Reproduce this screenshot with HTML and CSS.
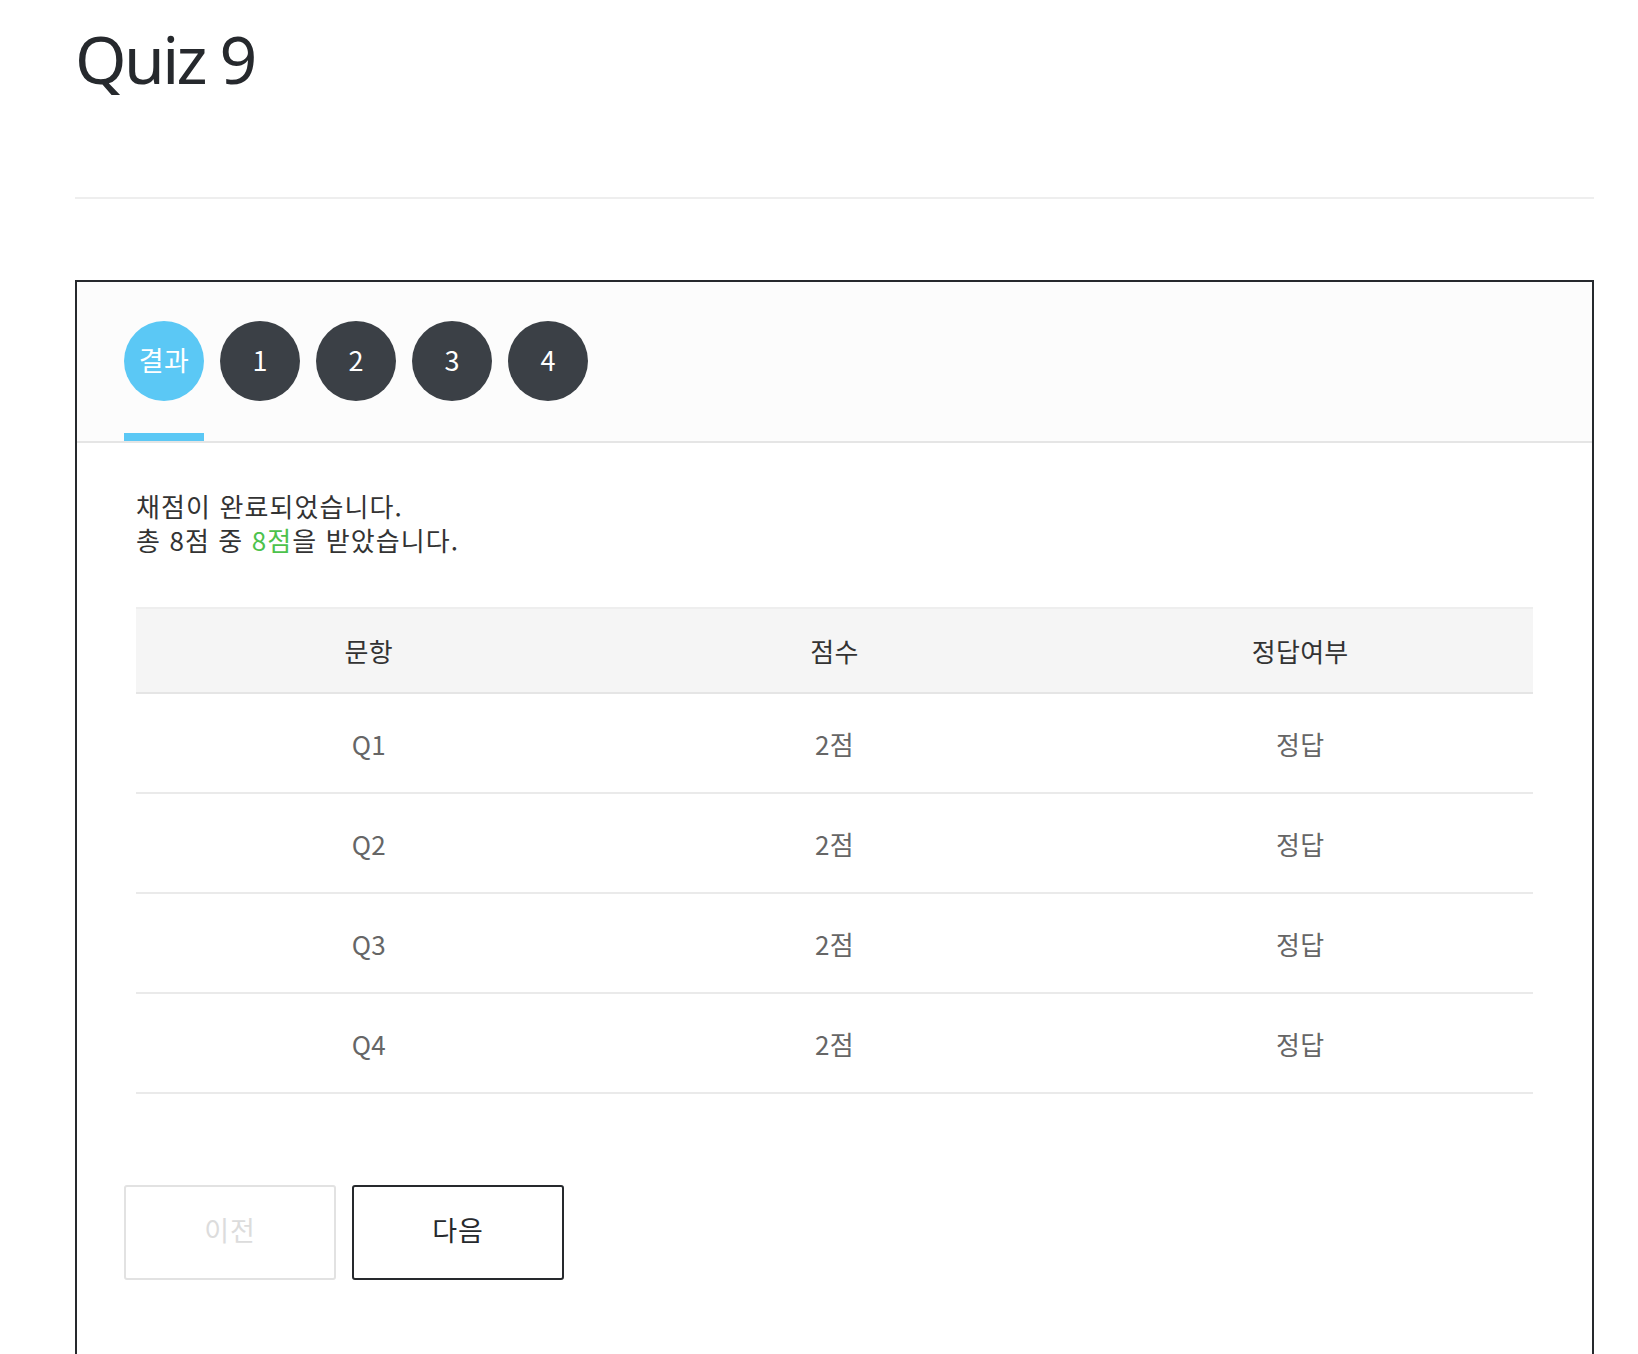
FILE: index.html
```html
<!DOCTYPE html>
<html lang="ko">
<head>
<meta charset="utf-8">
<title>Quiz 9</title>
<link rel="stylesheet" href="styles.css">
</head>
<body>
<div class="page">
  <h1 class="title">Quiz 9</h1>
  <hr class="divider">
  <section class="quiz-box">
    <nav class="tabs">
      <div class="tab tab-active"><span class="circle circle-result">결과</span></div>
      <div class="tab"><span class="circle">1</span></div>
      <div class="tab"><span class="circle">2</span></div>
      <div class="tab"><span class="circle">3</span></div>
      <div class="tab"><span class="circle">4</span></div>
    </nav>
    <div class="content">
      <p class="summary">채점이 완료되었습니다.<br>총 8점 중 <span class="score">8점</span>을 받았습니다.</p>
      <table class="result-table">
        <thead>
          <tr><th>문항</th><th>점수</th><th>정답여부</th></tr>
        </thead>
        <tbody>
          <tr><td>Q1</td><td>2점</td><td>정답</td></tr>
          <tr><td>Q2</td><td>2점</td><td>정답</td></tr>
          <tr><td>Q3</td><td>2점</td><td>정답</td></tr>
          <tr><td>Q4</td><td>2점</td><td>정답</td></tr>
        </tbody>
      </table>
    </div>
    <div class="actions">
      <button class="btn btn-disabled" disabled>이전</button>
      <button class="btn btn-next">다음</button>
    </div>
  </section>
</div>
</body>
</html>
```
FILE: styles.css
```css
* { box-sizing: border-box; }
html, body { margin: 0; padding: 0; background: #fff; }
body {
  font-family: "Noto Sans CJK KR", "Noto Sans", sans-serif;
  color: #333;
}
.page {
  width: 1519px;
  margin-left: 75px;
}
.title {
  margin: 0;
  padding-top: 20px;
  height: 197px;
  font-family: "Noto Sans", "Noto Sans CJK KR", sans-serif;
  font-weight: 400;
  font-size: 66px;
  line-height: 76px;
  letter-spacing: -2.6px;
  color: #26292d;
}
.divider {
  margin: 0;
  border: 0;
  height: 2px;
  background: #eeeeee;
}
.quiz-box {
  margin-top: 81px;
  border: 2px solid #26292d;
  border-bottom: 0;
  height: 1100px;
}
.tabs {
  display: flex;
  gap: 16px;
  padding: 39px 47px 0;
  background: #fcfcfc;
  border-bottom: 2px solid #e5e5e5;
}
.tab {
  width: 80px;
  padding-bottom: 40px;
  position: relative;
}
.tab-active::after {
  content: "";
  position: absolute;
  left: 0;
  right: 0;
  bottom: 0;
  height: 8px;
  background: #5bc8f5;
}
.circle {
  display: flex;
  align-items: center;
  justify-content: center;
  width: 80px;
  height: 80px;
  padding-bottom: 3px;
  border-radius: 50%;
  background: #3b4046;
  color: #fff;
  font-size: 27px;
}
.circle-result { background: #5bc8f5; letter-spacing: 0.5px; }
.content {
  padding: 46px 59px 0 59px;
}
.summary {
  margin: 0;
  font-size: 26px;
  line-height: 34px;
  letter-spacing: 1.1px;
  color: #333;
}
.score { color: #4cc24c; }
.result-table {
  margin-top: 50px;
  width: 100%;
  border-collapse: collapse;
  table-layout: fixed;
}
.result-table th {
  height: 85px;
  background: #f5f5f5;
  border-top: 2px solid #eeeeee;
  border-bottom: 2px solid #e5e5e5;
  font-weight: 400;
  font-size: 26px;
  letter-spacing: 0.3px;
  color: #333;
}
.result-table td {
  height: 100px;
  text-align: center;
  border-bottom: 2px solid #eaeaea;
  font-size: 26px;
  letter-spacing: 0.3px;
  color: #666;
}
.actions {
  display: flex;
  gap: 16px;
  padding: 91px 47px 0;
}
.btn {
  width: 212px;
  height: 95px;
  padding: 0 0 6px;
  border-radius: 3px;
  background: #fff;
  font-family: "Noto Sans CJK KR", sans-serif;
  font-size: 27px;
  letter-spacing: 1px;
}
.btn-disabled {
  border: 2px solid #e2e2e2;
  color: #dcdcdc;
}
.btn-next {
  border: 2px solid #26292d;
  color: #26292d;
}
```
